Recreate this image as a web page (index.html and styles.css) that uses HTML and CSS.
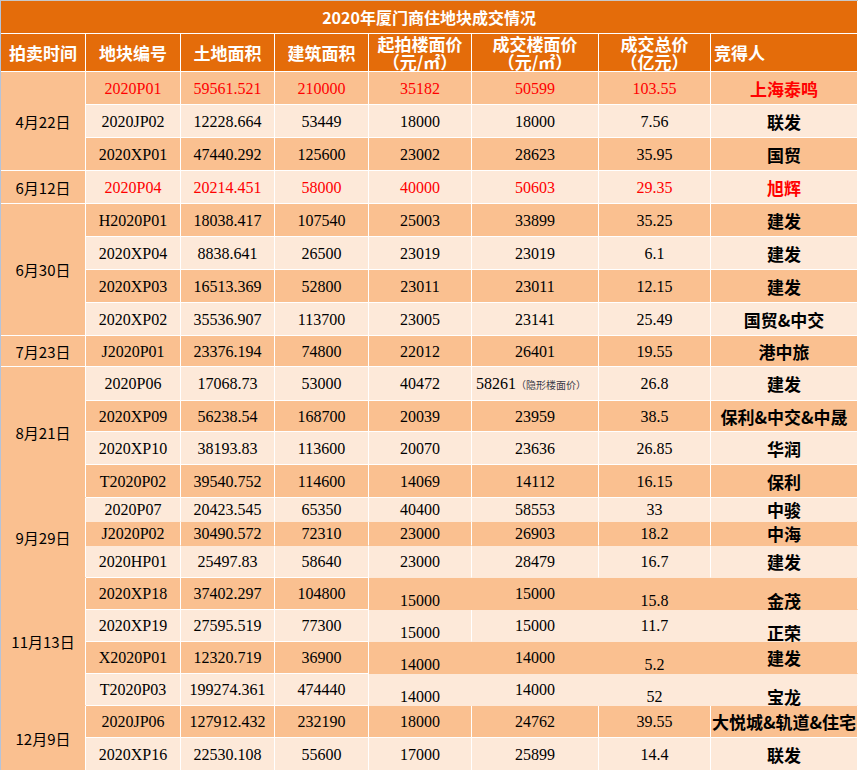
FILE: index.html
```html
<!DOCTYPE html>
<html lang="zh-CN">
<head>
<meta charset="utf-8">
<title>2020年厦门商住地块成交情况</title>
<link rel="stylesheet" href="styles.css">
</head>
<body>
<div class="sheet">
<table class="grid">
<colgroup>
<col class="c0"><col class="c1"><col class="c2"><col class="c3"><col class="c4"><col class="c5"><col class="c6"><col class="c7">
</colgroup>
<tr class="title"><td colspan="8">2020年厦门商住地块成交情况</td></tr>
<tr class="head">
<td>拍卖时间</td><td>地块编号</td><td>土地面积</td><td>建筑面积</td>
<td>起拍楼面价<br>（元/㎡）</td><td>成交楼面价<br>（元/㎡）</td><td>成交总价<br>（亿元）</td><td class="left">竞得人</td>
</tr>
<tr class="dk h33 red"><td class="date" rowspan="3">4月22日</td><td>2020P01</td><td>59561.521</td><td>210000</td><td>35182</td><td>50599</td><td>103.55</td><td class="name">上海泰鸣</td></tr>
<tr class="lt h33"><td>2020JP02</td><td>12228.664</td><td>53449</td><td>18000</td><td>18000</td><td>7.56</td><td class="name">联发</td></tr>
<tr class="dk h33"><td>2020XP01</td><td>47440.292</td><td>125600</td><td>23002</td><td>28623</td><td>35.95</td><td class="name">国贸</td></tr>
<tr class="lt h33 red"><td class="date">6月12日</td><td>2020P04</td><td>20214.451</td><td>58000</td><td>40000</td><td>50603</td><td>29.35</td><td class="name">旭辉</td></tr>
<tr class="dk h33"><td class="date" rowspan="4">6月30日</td><td>H2020P01</td><td>18038.417</td><td>107540</td><td>25003</td><td>33899</td><td>35.25</td><td class="name">建发</td></tr>
<tr class="lt h33"><td>2020XP04</td><td>8838.641</td><td>26500</td><td>23019</td><td>23019</td><td>6.1</td><td class="name">建发</td></tr>
<tr class="dk h33"><td>2020XP03</td><td>16513.369</td><td>52800</td><td>23011</td><td>23011</td><td>12.15</td><td class="name">建发</td></tr>
<tr class="lt h33"><td>2020XP02</td><td>35536.907</td><td>113700</td><td>23005</td><td>23141</td><td>25.49</td><td class="name">国贸&amp;中交</td></tr>
<tr class="dk h31"><td class="date">7月23日</td><td>J2020P01</td><td>23376.194</td><td>74800</td><td>22012</td><td>26401</td><td>19.55</td><td class="name">港中旅</td></tr>
<tr class="lt h34"><td class="date nb" rowspan="4">8月21日</td><td>2020P06</td><td>17068.73</td><td>53000</td><td>40472</td><td class="left">58261<span class="note">（隐形楼面价）</span></td><td>26.8</td><td class="name">建发</td></tr>
<tr class="dk h31"><td>2020XP09</td><td>56238.54</td><td>168700</td><td>20039</td><td>23959</td><td>38.5</td><td class="name">保利&amp;中交&amp;中晟</td></tr>
<tr class="lt h33"><td>2020XP10</td><td>38193.83</td><td>113600</td><td>20070</td><td>23636</td><td>26.85</td><td class="name">华润</td></tr>
<tr class="dk h33"><td>T2020P02</td><td>39540.752</td><td>114600</td><td>14069</td><td>14112</td><td>16.15</td><td class="name">保利</td></tr>
<tr class="lt h24"><td class="date nb" rowspan="3">9月29日</td><td class="nb">2020P07</td><td class="nb">20423.545</td><td class="nb">65350</td><td class="nb">40400</td><td class="nb">58553</td><td class="nb">33</td><td class="name nb">中骏</td></tr>
<tr class="dk h24"><td class="nb">J2020P02</td><td class="nb">30490.572</td><td class="nb">72310</td><td class="nb">23000</td><td class="nb">26903</td><td class="nb">18.2</td><td class="name nb">中海</td></tr>
<tr class="lt h32"><td>2020HP01</td><td>25497.83</td><td>58640</td><td class="nb">23000</td><td class="nb">28479</td><td class="nb">16.7</td><td class="name nb">建发</td></tr>
<tr class="dk h32"><td class="date nb" rowspan="4">11月13日</td><td>2020XP18</td><td>37402.297</td><td>104800</td><td class="nr nb vb">15000</td><td class="nr nb">15000</td><td class="nr nb vb">15.8</td><td class="name nb vb">金茂</td></tr>
<tr class="lt h32"><td>2020XP19</td><td>27595.519</td><td>77300</td><td class="nb vb">15000</td><td class="nr nb">15000</td><td class="nr nb">11.7</td><td class="name nb vb">正荣</td></tr>
<tr class="dk h32"><td>X2020P01</td><td>12320.719</td><td>36900</td><td class="nr nb vb">14000</td><td class="nr nb">14000</td><td class="nr nb vb">5.2</td><td class="name nb">建发</td></tr>
<tr class="lt h32"><td>T2020P03</td><td>199274.361</td><td>474440</td><td class="nr nb vb">14000</td><td class="nr nb">14000</td><td class="nr nb vb">52</td><td class="name nb vb">宝龙</td></tr>
<tr class="dk h32"><td class="date" rowspan="2">12月9日</td><td>2020JP06</td><td>127912.432</td><td>232190</td><td>18000</td><td>24762</td><td>39.55</td><td class="name">大悦城&amp;轨道&amp;住宅</td></tr>
<tr class="lt h33"><td>2020XP16</td><td>22530.108</td><td>55600</td><td>17000</td><td>25899</td><td>14.4</td><td class="name">联发</td></tr>
</table>
</div>
</body>
</html>
```
FILE: styles.css
```css
html, body {
  margin: 0;
  padding: 0;
  overflow: hidden;
  background: #ffffff;
}

.sheet {
  width: 857px;
  border-top: 1px solid #c8c8c8;
  border-left: 1px solid #b4c3da;
}

.grid {
  border-collapse: separate;
  border-spacing: 0;
  table-layout: fixed;
  width: 857px;
  font-family: "Liberation Serif", "Noto Sans CJK SC", serif;
  font-size: 16px;
  line-height: 17px;
  color: #000;
}

.c0 { width: 85px; }
.c1 { width: 95px; }
.c2 { width: 94px; }
.c3 { width: 94px; }
.c4 { width: 103px; }
.c5 { width: 127px; }
.c6 { width: 112px; }
.c7 { width: 147px; }

.grid td {
  box-sizing: border-box;
  padding: 0;
  border-right: 1px solid #ffffff;
  border-bottom: 1px solid #ffffff;
  text-align: center;
  vertical-align: middle;
  white-space: nowrap;
}

.title td {
  height: 33px;
  background: #e46c0a;
  color: #ffffff;
  font-family: "Noto Sans CJK SC", sans-serif;
  font-weight: bold;
  font-size: 16px;
  line-height: 20px;
}

.head td {
  height: 38px;
  background: #e46c0a;
  color: #ffffff;
  font-family: "Noto Sans CJK SC", sans-serif;
  font-weight: bold;
  font-size: 17px;
  line-height: 18px;
}

.grid .head td.left {
  text-align: left;
  padding-left: 3px;
}

.dk td { background: #fac090; }
.lt td { background: #fde9d9; }
.grid td.date {
  background: #fac090;
  color: #000;
  font-family: "Noto Sans CJK SC", sans-serif;
  font-size: 15px;
}

.h24 td { height: 24px; }
.h31 td { height: 31px; }
.h32 td { height: 32px; }
.h33 td { height: 33px; }
.h34 td { height: 34px; }
.grid td.date { height: auto; }

.red td { color: #ff0000; }

.name {
  font-family: "Noto Sans CJK SC", sans-serif;
  font-weight: bold;
  font-size: 17px;
}

.grid td.left {
  text-align: left;
  padding-left: 4px;
}

.note {
  font-family: "Noto Sans CJK SC", sans-serif;
  font-size: 10px;
  color: #3a3a48;
}

.grid td.nr { border-right-color: transparent; }
.grid td.nb { border-bottom-color: transparent; }
.grid td.vb { vertical-align: bottom; }
```
